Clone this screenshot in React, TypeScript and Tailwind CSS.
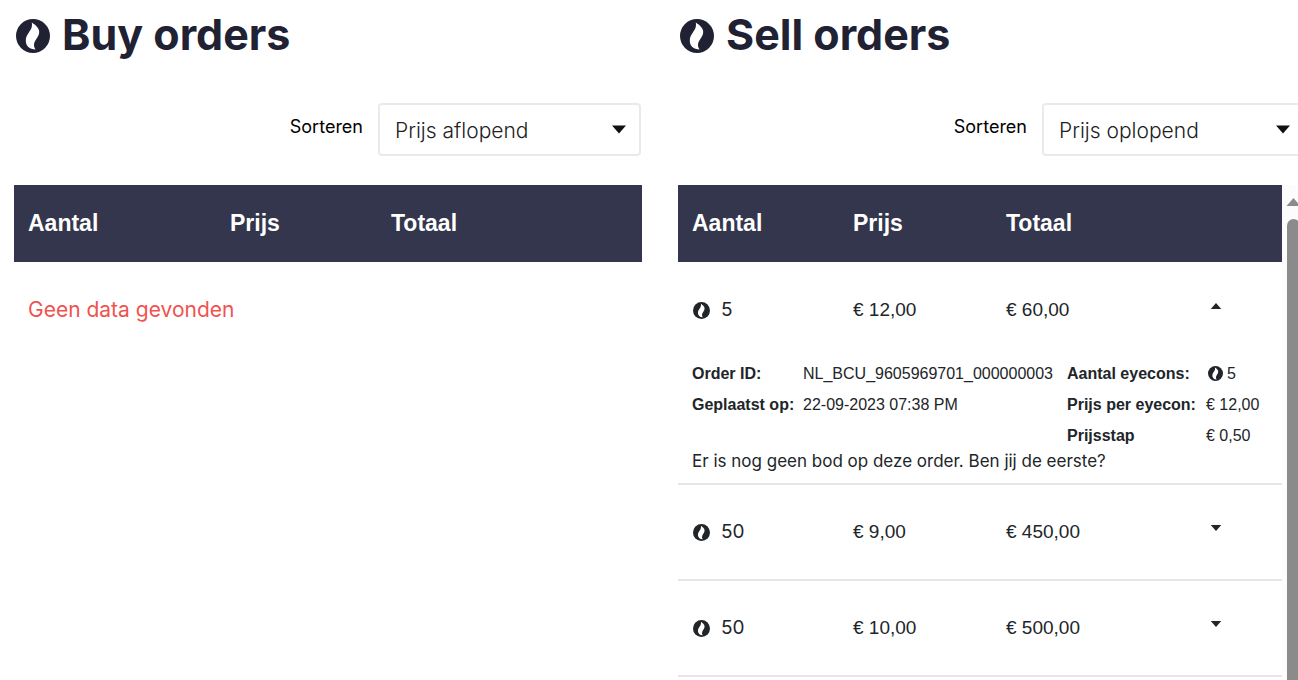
import { useState } from "react";

type Order = {
  id: string;
  placedAt: string;
  amount: number;
  price: string;
  step: string;
  total: string;
};

const sellOrders: Order[] = [
  { id: "NL_BCU_9605969701_000000003", placedAt: "22-09-2023 07:38 PM", amount: 5, price: "€ 12,00", step: "€ 0,50", total: "€ 60,00" },
  { id: "NL_BCU_9605969701_000000004", placedAt: "22-09-2023 07:41 PM", amount: 50, price: "€ 9,00", step: "€ 0,50", total: "€ 450,00" },
  { id: "NL_BCU_9605969701_000000005", placedAt: "22-09-2023 07:44 PM", amount: 50, price: "€ 10,00", step: "€ 0,50", total: "€ 500,00" },
];

function EyeconIcon({ className }: { className: string }) {
  return (
    <svg viewBox="0 0 34 34" className={className} aria-hidden="true">
      <circle cx="17" cy="17" r="17" fill="currentColor" />
      <path
        d="M15.8 3.6C19 6 23.2 8.6 23.2 13C23.2 18 18.2 21 18 25.6C17.9 27.6 18.6 29.4 19.6 30.6C13.4 30.4 9.8 27 9.8 21.6C9.8 15.4 14.8 12.6 15.8 7.8C16.1 6.2 16 4.8 15.8 3.6Z"
        fill="#fff"
      />
    </svg>
  );
}

function Caret({ up, className }: { up?: boolean; className: string }) {
  return (
    <svg viewBox="0 0 14 8" className={className} aria-hidden="true">
      <path d={up ? "M0 8L7 0L14 8Z" : "M0 0H14L7 8Z"} fill="currentColor" />
    </svg>
  );
}

function PanelHeading({ title }: { title: string }) {
  return (
    <h2 className="flex h-[72px] items-center gap-3 pl-[2px] text-[43px] leading-none font-bold text-[#212134]">
      <EyeconIcon className="size-[34px]" />
      <span className="pb-1">{title}</span>
    </h2>
  );
}

function SortSelect({ id, value }: { id: string; value: string }) {
  const [sort, setSort] = useState(value);

  return (
    <div className="mt-[31px] mb-[29px] flex justify-end gap-[15px] pr-px">
      <label htmlFor={id} className="pt-3 text-[18px] leading-6 text-black">Sorteren</label>
      <div className="relative">
        <select
          id={id}
          value={sort}
          onChange={(e) => setSort(e.target.value)}
          className="h-[53px] w-[263px] appearance-none rounded border-2 border-[#eaeaea] bg-white pt-[2px] pl-[15px] text-[21px] font-light text-[#212121]"
        >
          <option>Prijs aflopend</option>
          <option>Prijs oplopend</option>
        </select>
        <Caret className="pointer-events-none absolute top-[22px] right-[15px] h-[9px] w-[14px] text-[#111]" />
      </div>
    </div>
  );
}

function TableHead() {
  return (
    <thead className="bg-[#34364d] font-['Liberation_Sans',Arial,sans-serif] text-[23px] text-white">
      <tr className="h-[77px] text-left">
        <th scope="col" className="pl-[14px]">Aantal</th>
        <th scope="col" className="pl-[14px]">Prijs</th>
        <th scope="col" className="pl-[14px]">Totaal</th>
        <td></td>
      </tr>
    </thead>
  );
}

function OrderDetails({ order }: { order: Order }) {
  return (
    <tr className="border-b-2 border-[#e4e5ea]">
      <td colSpan={4} className="px-[14px] pb-3">
        <table className="w-full table-fixed text-left font-['Liberation_Sans',Arial,sans-serif] text-[16px] leading-[31px] whitespace-nowrap">
          <colgroup>
            <col className="w-[111px]" />
            <col className="w-[264px]" />
            <col className="w-[139px]" />
            <col />
          </colgroup>
          <tbody>
            <tr>
              <th scope="row">Order ID:</th>
              <td>{order.id}</td>
              <th scope="row">Aantal eyecons:</th>
              <td>
                <span className="flex items-center gap-1 pl-[2px]">
                  <EyeconIcon className="size-[15px]" />
                  {order.amount}
                </span>
              </td>
            </tr>
            <tr>
              <th scope="row">Geplaatst op:</th>
              <td>{order.placedAt}</td>
              <th scope="row">Prijs per eyecon:</th>
              <td>{order.price}</td>
            </tr>
            <tr>
              <td></td>
              <td></td>
              <th scope="row">Prijsstap</th>
              <td>{order.step}</td>
            </tr>
          </tbody>
        </table>
        <p className="text-[17px] leading-5">Er is nog geen bod op deze order. Ben jij de eerste?</p>
      </td>
    </tr>
  );
}

function OrderRows({ order, open, onToggle }: { order: Order; open: boolean; onToggle: () => void }) {
  return (
    <>
      <tr className={open ? "h-[96px]" : "h-[96px] border-b-2 border-[#e4e5ea]"}>
        <td className="pl-[14px]">
          <span className="flex items-center gap-[11px] pl-px text-[19px]">
            <EyeconIcon className="size-[17px]" />
            {order.amount}
          </span>
        </td>
        <td className="pl-[14px] font-['Liberation_Sans',Arial,sans-serif] text-[19px]">{order.price}</td>
        <td className="pl-[14px] font-['Liberation_Sans',Arial,sans-serif] text-[19px]">{order.total}</td>
        <td className="pl-[14px]">
          <button type="button" onClick={onToggle} aria-expanded={open} aria-label="Details" className="block pb-2">
            <Caret up={open} className="h-[6px] w-3" />
          </button>
        </td>
      </tr>
      {open && <OrderDetails order={order} />}
    </>
  );
}

export default function App() {
  const [openId, setOpenId] = useState<string | null>(sellOrders[0].id);

  return (
    <div className="h-screen overflow-hidden bg-white font-[Inter,sans-serif] text-[#212529]">
      <main className="-mr-2 grid h-full grid-cols-2 gap-9 pl-[14px]">
        <section>
          <PanelHeading title="Buy orders" />
          <SortSelect id="sort-buy" value="Prijs aflopend" />
          <table className="w-full table-fixed">
            <colgroup>
              <col className="w-[202px]" />
              <col className="w-[161px]" />
              <col className="w-[161px]" />
              <col />
            </colgroup>
            <TableHead />
            <tbody>
              <tr className="h-[96px]">
                <td colSpan={4} className="pl-[14px] text-[21px] text-[#ef5350]">Geen data gevonden</td>
              </tr>
            </tbody>
          </table>
        </section>

        <section className="flex min-h-0 flex-col">
          <PanelHeading title="Sell orders" />
          <SortSelect id="sort-sell" value="Prijs oplopend" />
          <div className="flex min-h-0 flex-1 overflow-hidden">
            <div className="min-w-0 flex-1">
              <table className="w-full table-fixed">
                <colgroup>
                  <col className="w-[161px]" />
                  <col className="w-[153px]" />
                  <col className="w-[204px]" />
                  <col />
                </colgroup>
                <TableHead />
                <tbody>
                  {sellOrders.map((order) => (
                    <OrderRows
                      key={order.id}
                      order={order}
                      open={openId === order.id}
                      onToggle={() => setOpenId(openId === order.id ? null : order.id)}
                    />
                  ))}
                </tbody>
              </table>
            </div>
            <div className="flex w-6 flex-col bg-[#fcfcfc] pt-[13px] pl-1 text-[#8b8b8b]" aria-hidden="true">
              <Caret up className="h-2 w-[15px]" />
              <div className="mt-[13px] ml-px w-[13px] flex-1 rounded-t-full bg-[#8b8b8b]"></div>
            </div>
          </div>
        </section>
      </main>
    </div>
  );
}
